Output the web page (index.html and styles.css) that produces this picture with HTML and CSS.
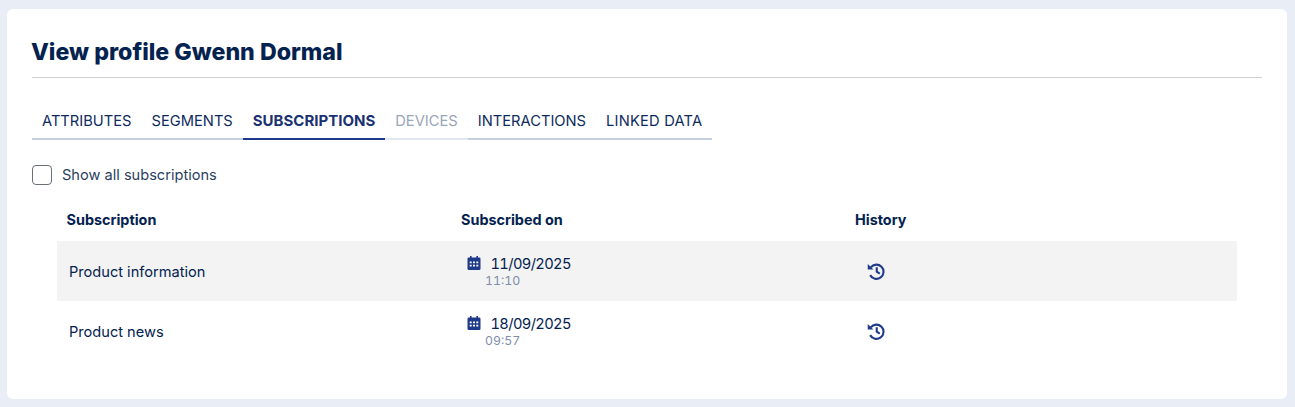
FILE: index.html
```html
<!DOCTYPE html>
<html lang="en">
<head>
<meta charset="utf-8">
<title>View profile</title>
<link rel="stylesheet" href="styles.css">
</head>
<body>
<main class="card">
  <h1 class="title">View profile Gwenn Dormal</h1>
  <nav class="tabs">
    <a class="tab">ATTRIBUTES</a>
    <a class="tab">SEGMENTS</a>
    <a class="tab active">SUBSCRIPTIONS</a>
    <a class="tab disabled">DEVICES</a>
    <a class="tab">INTERACTIONS</a>
    <a class="tab">LINKED DATA</a>
  </nav>
  <label class="check"><span class="box"></span><span>Show all subscriptions</span></label>
  <div class="table">
    <div class="row head">
      <div class="cell">Subscription</div>
      <div class="cell">Subscribed on</div>
      <div class="cell">History</div>
    </div>
    <div class="row body shaded">
      <div class="cell name">Product information</div>
      <div class="cell date">
        <div class="dateline">
          <svg class="cal" viewBox="0 0 14 14"><path fill-rule="evenodd" d="M3 0h1.600v1.600h4.800V0H11v1.600h1.200A1.300 1.300 0 0 1 13.500 3v9.700a1.300 1.300 0 0 1-1.300 1.300H1.800A1.300 1.300 0 0 1 .5 12.700V3a1.300 1.300 0 0 1 1.300-1.400H3zM2.700 5.500v1.700h2V5.500zm3.300 0v1.700h2V5.500zm3.300 0v1.700h2V5.500zM2.700 8.800v1.700h2V8.800zm3.300 0v1.700h2V8.800zm3.300 0v1.700h2V8.800z"/></svg>
          <span>11/09/2025</span>
        </div>
        <div class="time">11:10</div>
      </div>
      <div class="cell hist"><svg class="clock" viewBox="0 0 24 24"><path class="wedge" d="M1 2.500 8.500 10H1z"/><path class="hand" d="M5 7.200A9.500 9.500 0 1 1 4.200 17.500M13 7v6l4 2.500"/></svg></div>
    </div>
    <div class="row body">
      <div class="cell name">Product news</div>
      <div class="cell date">
        <div class="dateline">
          <svg class="cal" viewBox="0 0 14 14"><path fill-rule="evenodd" d="M3 0h1.600v1.600h4.800V0H11v1.600h1.200A1.300 1.300 0 0 1 13.500 3v9.700a1.300 1.300 0 0 1-1.300 1.300H1.800A1.300 1.300 0 0 1 .5 12.700V3a1.300 1.300 0 0 1 1.300-1.400H3zM2.700 5.500v1.700h2V5.500zm3.300 0v1.700h2V5.500zm3.300 0v1.700h2V5.500zM2.700 8.800v1.700h2V8.800zm3.300 0v1.700h2V8.800zm3.300 0v1.700h2V8.800z"/></svg>
          <span>18/09/2025</span>
        </div>
        <div class="time">09:57</div>
      </div>
      <div class="cell hist"><svg class="clock" viewBox="0 0 24 24"><path class="wedge" d="M1 2.500 8.500 10H1z"/><path class="hand" d="M5 7.200A9.500 9.500 0 1 1 4.200 17.500M13 7v6l4 2.500"/></svg></div>
    </div>
  </div>
</main>
</body>
</html>
```
FILE: styles.css
```css
* { box-sizing: border-box; }
html, body { height: 100%; }
body {
  margin: 0;
  padding: 9px 8px 8px 7px;
  background: #e9eef6;
  font-family: "Inter", "Noto Sans", sans-serif;
  color: #03224f;
  overflow: hidden;
}
.card {
  height: 390px;
  background: #fff;
  border-radius: 6px;
  padding: 25px;
}
.title {
  margin: 0;
  height: 44px;
  border-bottom: 1px solid #cfd1d6;
  font-family: "Inter", sans-serif;
  font-size: 23.2px;
  font-weight: 800;
  line-height: 36px;
  text-indent: -1px;
  color: #03224f;
}
.tabs {
  display: flex;
  margin-top: 28px;
}
.tab {
  height: 34px;
  padding: 0 10px;
  line-height: 30px;
  font-size: 14.7px;
  border-bottom: 2px solid #c5cde0;
  color: #0d2b5e;
}
.tab:last-child { letter-spacing: 0.2px; }
.tab.active { border-bottom-color: #1f3a8a; font-weight: 700; font-size: 15px; color: #1b3272; }
.tab.disabled { border-bottom-color: #e2e6f0; color: #9aa5b8; }
.check {
  display: flex;
  align-items: center;
  gap: 10px;
  margin-top: 25px;
  font-size: 14.6px;
  height: 20px;
  color: #2a3f5f;
}
.box {
  width: 20px;
  height: 20px;
  border: 1px solid #6b6f76;
  border-radius: 4px;
  background: #fff;
}
.table { margin: 14px 25px 0; }
.row {
  display: grid;
  grid-template-columns: 394.5px 394px 1fr;
  align-items: center;
}
.head { height: 42px; padding-bottom: 2px; font-weight: 700; font-size: 14.4px; color: #03224f; }
.head .cell { padding-left: 9.5px; }
.body { height: 60px; font-size: 14.6px; }
.shaded { background: #f3f3f3; }
.name { padding: 2px 0 0 12px; }
.date { padding-left: 15px; }
.dateline { display: flex; align-items: center; gap: 10px; line-height: 20px; font-size: 14.7px; letter-spacing: -0.65px; font-variant-numeric: tabular-nums; }
.cal { width: 14px; height: 14px; fill: #1f3a8a; margin-top: -2px; }
.time { margin-left: 18.5px; margin-top: -1px; font-size: 12.3px; line-height: 16px; color: #7f8ea8; font-variant-numeric: tabular-nums; }
.hist { padding-left: 21px; display: flex; align-items: center; }
.clock { width: 18px; height: 18px; }
.wedge { fill: #1f3a8a; }
.hand { fill: none; stroke: #1f3a8a; stroke-width: 2.8; }
```
